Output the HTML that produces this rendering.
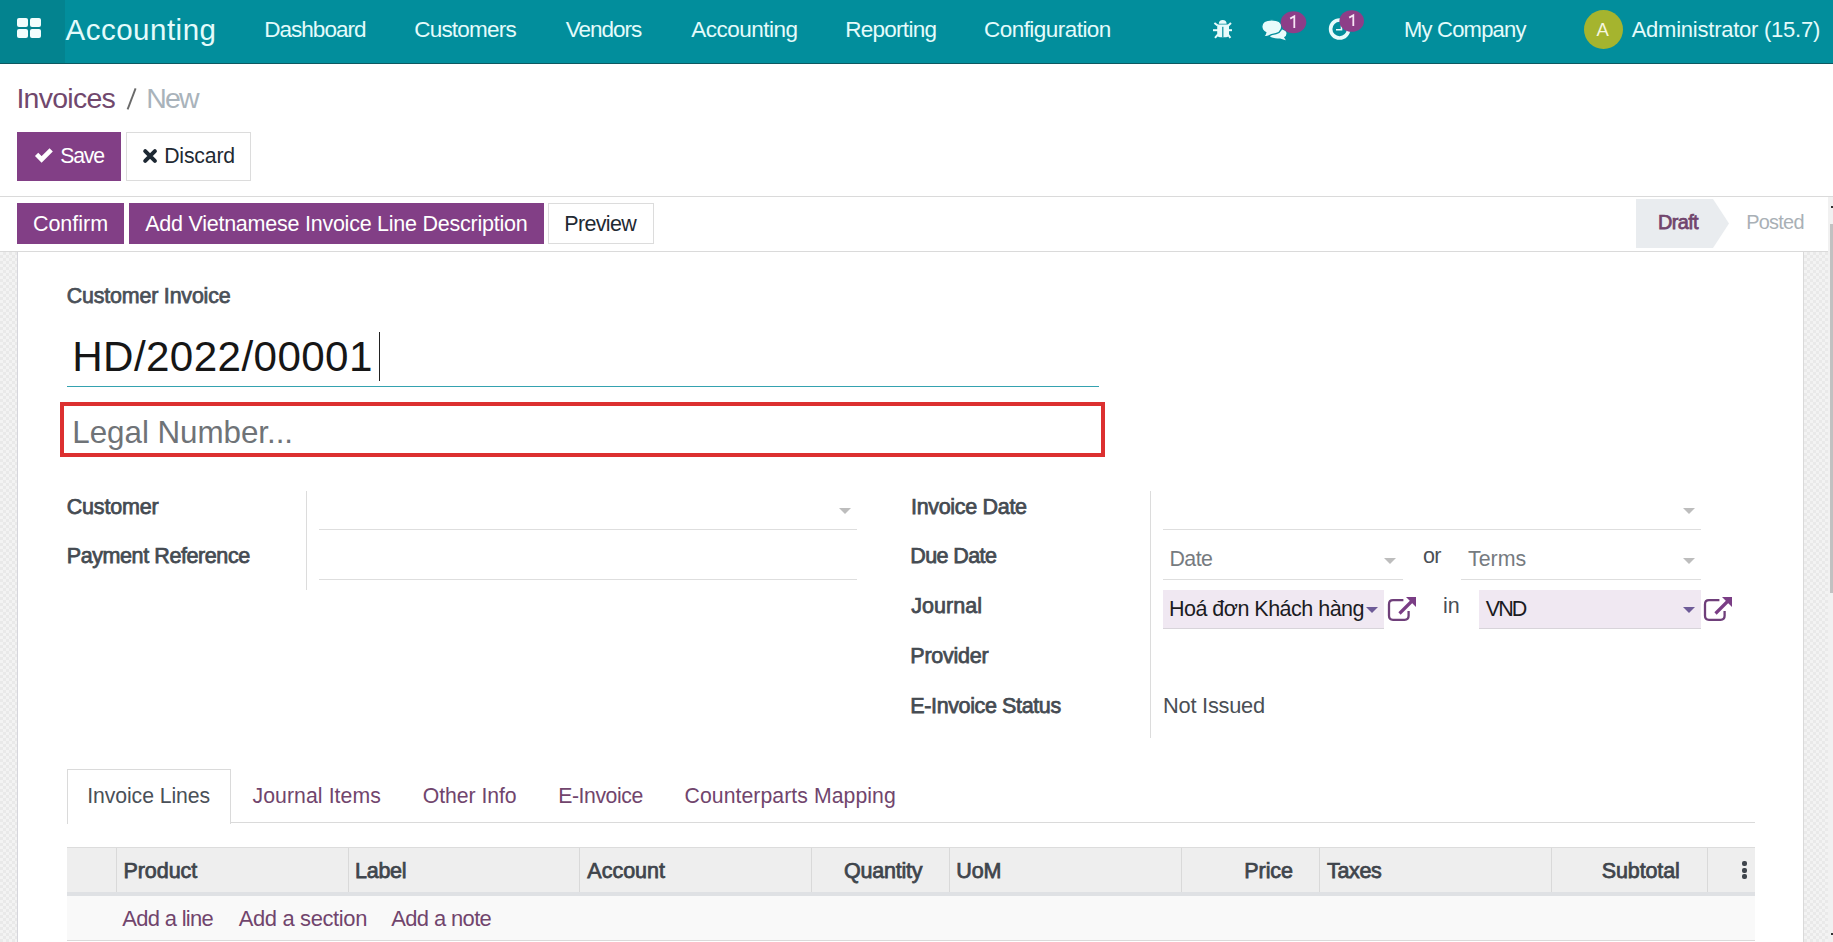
<!DOCTYPE html>
<html>
<head>
<meta charset="utf-8">
<style>
html,body{margin:0;padding:0;}
body{width:1833px;height:942px;overflow:hidden;position:relative;background:#fff;font-family:"Liberation Sans",sans-serif;}
.t{position:absolute;white-space:nowrap;line-height:1;}
.r{position:absolute;}
.checker{background-color:#f3f3f3;background-image:linear-gradient(45deg,#e9e9e9 25%,transparent 25%,transparent 75%,#e9e9e9 75%),linear-gradient(45deg,#e9e9e9 25%,transparent 25%,transparent 75%,#e9e9e9 75%);background-size:6px 6px;background-position:0 0,3px 3px;}
.caret{position:absolute;width:0;height:0;border-left:6px solid transparent;border-right:6px solid transparent;border-top:6px solid #bdbdbd;}
</style>
</head>
<body>
<!-- navbar -->
<div class="r" style="left:0;top:0;width:1833px;height:63px;background:#028e9c;"></div>
<div class="r" style="left:0;top:0;width:65px;height:63px;background:#03838f;"></div>
<div class="r" style="left:0;top:63px;width:1833px;height:1px;background:#0d5961;"></div>
<!-- app grid icon -->
<div class="r" style="left:17px;top:18px;width:11px;height:9px;background:#f2fdfd;border-radius:2px;"></div>
<div class="r" style="left:30px;top:18px;width:11px;height:9px;background:#f2fdfd;border-radius:2px;"></div>
<div class="r" style="left:17px;top:29px;width:11px;height:9px;background:#f2fdfd;border-radius:2px;"></div>
<div class="r" style="left:30px;top:29px;width:11px;height:9px;background:#f2fdfd;border-radius:2px;"></div>
<!-- systray icons -->
<svg class="r" style="left:1200px;top:10px;" width="180" height="40" viewBox="1200 10 180 40">
  <g fill="#e8fbfb" stroke="none">
    <!-- bug -->
    <path d="M1218.8 23.8 A3.9 3.9 0 0 1 1226.6 23.8 Z"/>
    <path d="M1217.2 24.6 H1229 V34.5 Q1229 37.2 1226 37.2 H1220.2 Q1217.2 37.2 1217.2 34.5 Z"/>
  </g>
  <rect x="1222.2" y="26.8" width="1.2" height="10.5" fill="#028e9c"/>
  <g stroke="#e8fbfb" stroke-width="2" fill="none" stroke-linecap="butt">
    <path d="M1214.4 23 L1217.6 25.5"/><path d="M1231 23 L1228.4 25.5"/>
    <path d="M1213 30.2 H1218"/><path d="M1232 30.2 H1228"/>
    <path d="M1215 37.8 L1218 34.5"/><path d="M1230.4 37.8 L1228 34.5"/>
  </g>
  <!-- comments -->
  <path d="M1272 28 Q1286.5 28.5 1286.5 33.5 Q1286.5 36 1284 37.3 L1285.8 40.2 L1280 38.4 Q1271 39 1269 35 Z" fill="#e8fbfb"/>
  <path d="M1281.8 26.6 Q1281.8 33.8 1271.5 34.6 Q1266 38 1263.8 35.8 Q1265.5 34.5 1265.8 32.6 Q1261.8 30.6 1261.8 26.6 Q1261.8 19.8 1271.8 19.8 Q1281.8 19.8 1281.8 26.6 Z" fill="#e8fbfb" stroke="#028e9c" stroke-width="1.3"/>
  <!-- clock -->
  <circle cx="1339.6" cy="29" r="9" fill="none" stroke="#e8fbfb" stroke-width="3.6"/>
  <path d="M1336 29.8 H1341.5 V25" fill="none" stroke="#e8fbfb" stroke-width="1.6"/>
  <!-- badges -->
  <ellipse cx="1293.5" cy="22.3" rx="12.8" ry="11" fill="#8d3e88"/>
  <ellipse cx="1351.7" cy="21" rx="12.3" ry="10.8" fill="#8d3e88"/>
</svg>
<svg class="r" style="left:1280px;top:8px;" width="90" height="30" viewBox="1280 8 90 30">
  <path d="M1290.2 18.6 L1294.3 16.2 V28" fill="none" stroke="#f8e6f5" stroke-width="1.8"/>
  <path d="M1349.2 17.6 L1353.3 15.2 V26" fill="none" stroke="#f8e6f5" stroke-width="1.8"/>
</svg>
<!-- avatar -->
<div class="r" style="left:1584px;top:10px;width:39px;height:39px;border-radius:50%;background:#a5b42e;"></div>
<div class="t" style="left:1596.6px;top:21px;font-size:18.5px;color:#f6f7df;">A</div>

<!-- control panel -->
<svg class="r" style="left:120px;top:84px;" width="24" height="30" viewBox="120 84 24 30">
  <path d="M135.6 88.4 L127.6 109.4" stroke="#6a6a6a" stroke-width="1.9"/>
</svg>
<div class="r" style="left:17px;top:132px;width:104px;height:49px;background:#823f86;"></div>
<div class="r" style="left:126px;top:132px;width:123px;height:47px;border:1px solid #dcdcdc;background:#fff;"></div>
<svg class="r" style="left:30px;top:142px;" width="30" height="28" viewBox="30 142 30 28">
  <path d="M36.6 154.4 L41.6 159.4 L51.2 149.8" fill="none" stroke="#fff" stroke-width="4.6" stroke-linejoin="miter"/>
</svg>
<svg class="r" style="left:138px;top:142px;" width="26" height="28" viewBox="138 142 26 28">
  <path d="M145.2 151.2 L154.9 160.9 M154.9 151.2 L145.2 160.9" stroke="#1d2833" stroke-width="4" stroke-linecap="round"/>
</svg>
<div class="r" style="left:0;top:196px;width:1833px;height:1px;background:#dadada;"></div>
<!-- status bar buttons -->
<div class="r" style="left:17px;top:203px;width:107px;height:41px;background:#823f86;"></div>
<div class="r" style="left:129px;top:203px;width:415px;height:41px;background:#823f86;"></div>
<div class="r" style="left:548px;top:203px;width:104px;height:39px;border:1px solid #dcdcdc;background:#fff;"></div>
<svg class="r" style="left:1636px;top:199px;" width="94" height="49" viewBox="0 0 94 49">
  <path d="M0 0 H77 L93 24.5 L77 49 H0 Z" fill="#e9ecef"/>
</svg>
<div class="r" style="left:0;top:251px;width:1828px;height:1px;background:#dadada;"></div>

<!-- background around sheet -->
<div class="r checker" style="left:0;top:252px;width:17px;height:690px;"></div>
<div class="r" style="left:17px;top:252px;width:1px;height:690px;background:#d6d6dc;"></div>
<div class="r checker" style="left:1804px;top:252px;width:24px;height:690px;"></div>
<div class="r" style="left:1803px;top:252px;width:1px;height:690px;background:#d9d9d9;"></div>
<!-- scrollbar -->
<div class="r" style="left:1828px;top:197px;width:5px;height:745px;background:#f1f1f1;"></div>
<div class="r" style="left:1830px;top:224px;width:3px;height:369px;background:#c1c1c1;"></div>
<div class="r" style="left:1831px;top:206px;width:2px;height:2px;background:#333;"></div>
<div class="r" style="left:1831px;top:933px;width:2px;height:2px;background:#333;"></div>

<!-- title -->
<div class="r" style="left:67px;top:386px;width:1032px;height:1px;background:#35a2b0;"></div>
<div class="r" style="left:379px;top:332px;width:1px;height:49px;background:#222;"></div>
<div class="r" style="left:60px;top:402px;width:1037px;height:47px;border:4px solid #dc3030;"></div>

<!-- groups -->
<div class="r" style="left:306px;top:491px;width:1px;height:99px;background:#dcdcdc;"></div>
<div class="r" style="left:319px;top:529px;width:538px;height:1px;background:#dedede;"></div>
<div class="r" style="left:319px;top:579px;width:538px;height:1px;background:#dedede;"></div>
<div class="caret" style="left:839px;top:508px;"></div>

<div class="r" style="left:1150px;top:491px;width:1px;height:247px;background:#dcdcdc;"></div>
<div class="r" style="left:1163px;top:529px;width:538px;height:1px;background:#dedede;"></div>
<div class="caret" style="left:1683px;top:508px;"></div>
<div class="r" style="left:1163px;top:579px;width:240px;height:1px;background:#dedede;"></div>
<div class="caret" style="left:1384px;top:558px;"></div>
<div class="r" style="left:1461px;top:579px;width:240px;height:1px;background:#dedede;"></div>
<div class="caret" style="left:1683px;top:558px;"></div>
<div class="r" style="left:1163px;top:590px;width:221px;height:38px;background:#f0e8f2;border-bottom:1px solid #d8d4da;"></div>
<div class="caret" style="left:1366px;top:607px;border-top-color:#6e5b98;"></div>
<div class="r" style="left:1479px;top:590px;width:222px;height:38px;background:#f0e8f2;border-bottom:1px solid #d8d4da;"></div>
<div class="caret" style="left:1683px;top:607px;border-top-color:#6e5b98;"></div>
<svg class="r" style="left:1380px;top:590px;" width="40" height="38" viewBox="1380 590 40 38">
  <path d="M1403.4 600.2 H1393 Q1389 600.2 1389 604.2 V615.8 Q1389 619.8 1393 619.8 H1404.6 Q1408.6 619.8 1408.6 615.8 V611" fill="none" stroke="#6f3f7a" stroke-width="2.3"/>
  <path d="M1399.5 613.5 L1411.5 601.5" stroke="#7a3d85" stroke-width="3.2"/>
  <path d="M1406 597.1 H1416 V607 Z" fill="#7a3d85"/>
</svg>
<svg class="r" style="left:1696px;top:590px;" width="40" height="38" viewBox="1696 590 40 38">
  <path d="M1719.4 600.2 H1709 Q1705 600.2 1705 604.2 V615.8 Q1705 619.8 1709 619.8 H1720.6 Q1724.6 619.8 1724.6 615.8 V611" fill="none" stroke="#6f3f7a" stroke-width="2.3"/>
  <path d="M1715.5 613.5 L1727.5 601.5" stroke="#7a3d85" stroke-width="3.2"/>
  <path d="M1722 597.1 H1732 V607 Z" fill="#7a3d85"/>
</svg>

<!-- tabs -->
<div class="r" style="left:67px;top:822px;width:1688px;height:1px;background:#dadada;"></div>
<div class="r" style="left:67px;top:769px;width:162px;height:54px;border:1px solid #dadada;border-bottom:none;background:#fff;"></div>

<!-- table -->
<div class="r" style="left:67px;top:847px;width:1688px;height:45px;background:#eeeeee;border-top:1px solid #dcdcdc;"></div>
<div class="r" style="left:67px;top:892px;width:1688px;height:4px;background:#dfe1e4;"></div>
<div class="r" style="left:67px;top:896px;width:1688px;height:44px;background:#f9f9f9;"></div>
<div class="r" style="left:67px;top:940px;width:1688px;height:1px;background:#dadada;"></div>
<div class="r" style="left:116px;top:848px;width:1px;height:44px;background:#d9d9d9;"></div>
<div class="r" style="left:348px;top:848px;width:1px;height:44px;background:#d9d9d9;"></div>
<div class="r" style="left:579px;top:848px;width:1px;height:44px;background:#d9d9d9;"></div>
<div class="r" style="left:811px;top:848px;width:1px;height:44px;background:#d9d9d9;"></div>
<div class="r" style="left:949px;top:848px;width:1px;height:44px;background:#d9d9d9;"></div>
<div class="r" style="left:1181px;top:848px;width:1px;height:44px;background:#d9d9d9;"></div>
<div class="r" style="left:1319px;top:848px;width:1px;height:44px;background:#d9d9d9;"></div>
<div class="r" style="left:1551px;top:848px;width:1px;height:44px;background:#d9d9d9;"></div>
<div class="r" style="left:1707px;top:848px;width:1px;height:44px;background:#d9d9d9;"></div>
<div class="r" style="left:1742px;top:861px;width:5px;height:5px;background:#3f454c;border-radius:2px;"></div>
<div class="r" style="left:1742px;top:867.5px;width:5px;height:5px;background:#3f454c;border-radius:2px;"></div>
<div class="r" style="left:1742px;top:874px;width:5px;height:5px;background:#3f454c;border-radius:2px;"></div>

<div class="t" style="left:65.50px;top:15px;font-size:29.5px;letter-spacing:0.50px;color:#e4fbfb;font-weight:400;">Accounting</div>
<div class="t" style="left:264.20px;top:19px;font-size:22.5px;letter-spacing:-0.97px;color:#e4fbfb;font-weight:400;">Dashboard</div>
<div class="t" style="left:414.20px;top:19px;font-size:22.5px;letter-spacing:-0.78px;color:#e4fbfb;font-weight:400;">Customers</div>
<div class="t" style="left:565.70px;top:19px;font-size:22.5px;letter-spacing:-1.00px;color:#e4fbfb;font-weight:400;">Vendors</div>
<div class="t" style="left:691.30px;top:19px;font-size:22.5px;letter-spacing:-0.51px;color:#e4fbfb;font-weight:400;">Accounting</div>
<div class="t" style="left:845.20px;top:19px;font-size:22.5px;letter-spacing:-0.72px;color:#e4fbfb;font-weight:400;">Reporting</div>
<div class="t" style="left:984.00px;top:19px;font-size:22.5px;letter-spacing:-0.54px;color:#e4fbfb;font-weight:400;">Configuration</div>
<div class="t" style="left:1404.00px;top:19px;font-size:22px;letter-spacing:-0.79px;color:#e4fbfb;font-weight:400;">My Company</div>
<div class="t" style="left:1631.70px;top:19px;font-size:22px;letter-spacing:-0.24px;color:#e4fbfb;font-weight:400;">Administrator (15.7)</div>
<div class="t" style="left:16.40px;top:84px;font-size:28.49px;letter-spacing:-0.72px;color:#71486d;font-weight:400;">Invoices</div>
<div class="t" style="left:146.20px;top:84px;font-size:28.49px;letter-spacing:-1.81px;color:#a9b3bb;font-weight:400;">New</div>
<div class="t" style="left:60.30px;top:145px;font-size:21.22px;letter-spacing:-1.19px;color:#ffffff;font-weight:400;">Save</div>
<div class="t" style="left:164.20px;top:145px;font-size:21.22px;letter-spacing:-0.17px;color:#1f2a33;font-weight:400;">Discard</div>
<div class="t" style="left:32.90px;top:214px;font-size:21.51px;letter-spacing:-0.01px;color:#ffffff;font-weight:400;">Confirm</div>
<div class="t" style="left:145.20px;top:214px;font-size:21.51px;letter-spacing:-0.24px;color:#ffffff;font-weight:400;">Add Vietnamese Invoice Line Description</div>
<div class="t" style="left:564.30px;top:214px;font-size:21.51px;letter-spacing:-0.66px;color:#1f2a33;font-weight:400;">Preview</div>
<div class="t" style="left:1658.00px;top:213px;font-size:19.91px;letter-spacing:-0.65px;color:#71456d;font-weight:400;-webkit-text-stroke:0.75px currentColor;">Draft</div>
<div class="t" style="left:1746.20px;top:213px;font-size:19.91px;letter-spacing:-0.74px;color:#a9b0b6;font-weight:400;">Posted</div>
<div class="t" style="left:66.80px;top:286px;font-size:21.37px;letter-spacing:-0.16px;color:#4a5058;font-weight:400;-webkit-text-stroke:0.75px currentColor;">Customer Invoice</div>
<div class="t" style="left:72.20px;top:336px;font-size:42.2px;letter-spacing:0.39px;color:#161616;font-weight:400;">HD/2022/00001</div>
<div class="t" style="left:72.30px;top:417px;font-size:31.4px;letter-spacing:-0.06px;color:#6f7377;font-weight:400;">Legal Number...</div>
<div class="t" style="left:66.75px;top:497px;font-size:21.5px;letter-spacing:-0.18px;color:#454b52;font-weight:400;-webkit-text-stroke:0.75px currentColor;">Customer</div>
<div class="t" style="left:66.75px;top:546px;font-size:21.5px;letter-spacing:-0.41px;color:#454b52;font-weight:400;-webkit-text-stroke:0.75px currentColor;">Payment Reference</div>
<div class="t" style="left:911.00px;top:497px;font-size:21.5px;letter-spacing:-0.32px;color:#454b52;font-weight:400;-webkit-text-stroke:0.75px currentColor;">Invoice Date</div>
<div class="t" style="left:910.30px;top:546px;font-size:21.5px;letter-spacing:-0.60px;color:#454b52;font-weight:400;-webkit-text-stroke:0.75px currentColor;">Due Date</div>
<div class="t" style="left:911.30px;top:596px;font-size:21.5px;letter-spacing:0.03px;color:#454b52;font-weight:400;-webkit-text-stroke:0.75px currentColor;">Journal</div>
<div class="t" style="left:910.30px;top:646px;font-size:21.5px;letter-spacing:-0.26px;color:#454b52;font-weight:400;-webkit-text-stroke:0.75px currentColor;">Provider</div>
<div class="t" style="left:910.30px;top:696px;font-size:21.5px;letter-spacing:-0.38px;color:#454b52;font-weight:400;-webkit-text-stroke:0.75px currentColor;">E-Invoice Status</div>
<div class="t" style="left:1169.50px;top:549px;font-size:21.37px;letter-spacing:-0.58px;color:#767b80;font-weight:400;">Date</div>
<div class="t" style="left:1468.00px;top:549px;font-size:21.37px;letter-spacing:0.01px;color:#767b80;font-weight:400;">Terms</div>
<div class="t" style="left:1169.00px;top:599px;font-size:21.5px;letter-spacing:-0.51px;color:#1b1b22;font-weight:400;">Hoá đơn Khách hàng</div>
<div class="t" style="left:1485.70px;top:599px;font-size:21.5px;letter-spacing:-1.88px;color:#1b1b22;font-weight:400;">VND</div>
<div class="t" style="left:1163.00px;top:695px;font-size:21.8px;letter-spacing:-0.23px;color:#4a4f55;font-weight:400;">Not Issued</div>
<div class="t" style="left:1423.10px;top:546px;font-size:21.5px;letter-spacing:-0.86px;color:#4a4f55;font-weight:400;">or</div>
<div class="t" style="left:1442.90px;top:596px;font-size:21.5px;letter-spacing:0.12px;color:#4a4f55;font-weight:400;">in</div>
<div class="t" style="left:87.20px;top:785px;font-size:21.22px;letter-spacing:-0.08px;color:#4a5058;font-weight:400;">Invoice Lines</div>
<div class="t" style="left:252.50px;top:785px;font-size:21.22px;letter-spacing:0.08px;color:#71456d;font-weight:400;">Journal Items</div>
<div class="t" style="left:422.80px;top:785px;font-size:21.22px;letter-spacing:-0.06px;color:#71456d;font-weight:400;">Other Info</div>
<div class="t" style="left:558.20px;top:785px;font-size:21.22px;letter-spacing:-0.43px;color:#71456d;font-weight:400;">E-Invoice</div>
<div class="t" style="left:684.50px;top:785px;font-size:21.22px;letter-spacing:0.07px;color:#71456d;font-weight:400;">Counterparts Mapping</div>
<div class="t" style="left:123.40px;top:861px;font-size:21.5px;letter-spacing:-0.04px;color:#3f454c;font-weight:400;-webkit-text-stroke:0.75px currentColor;">Product</div>
<div class="t" style="left:355.10px;top:861px;font-size:21.5px;letter-spacing:-0.31px;color:#3f454c;font-weight:400;-webkit-text-stroke:0.75px currentColor;">Label</div>
<div class="t" style="left:587.30px;top:861px;font-size:21.5px;letter-spacing:-0.00px;color:#3f454c;font-weight:400;-webkit-text-stroke:0.75px currentColor;">Account</div>
<div class="t" style="left:844.00px;top:861px;font-size:21.5px;letter-spacing:-0.22px;color:#3f454c;font-weight:400;-webkit-text-stroke:0.75px currentColor;">Quantity</div>
<div class="t" style="left:956.30px;top:861px;font-size:21.5px;letter-spacing:-0.14px;color:#3f454c;font-weight:400;-webkit-text-stroke:0.75px currentColor;">UoM</div>
<div class="t" style="left:1244.30px;top:861px;font-size:21.5px;letter-spacing:-0.08px;color:#3f454c;font-weight:400;-webkit-text-stroke:0.75px currentColor;">Price</div>
<div class="t" style="left:1327.00px;top:861px;font-size:21.5px;letter-spacing:-0.35px;color:#3f454c;font-weight:400;-webkit-text-stroke:0.75px currentColor;">Taxes</div>
<div class="t" style="left:1601.80px;top:861px;font-size:21.5px;letter-spacing:-0.13px;color:#3f454c;font-weight:400;-webkit-text-stroke:0.75px currentColor;">Subtotal</div>
<div class="t" style="left:122.20px;top:908px;font-size:21.95px;letter-spacing:-0.66px;color:#71456d;font-weight:400;">Add a line</div>
<div class="t" style="left:238.70px;top:908px;font-size:21.95px;letter-spacing:-0.35px;color:#71456d;font-weight:400;">Add a section</div>
<div class="t" style="left:391.20px;top:908px;font-size:21.95px;letter-spacing:-0.61px;color:#71456d;font-weight:400;">Add a note</div>

</body>
</html>
